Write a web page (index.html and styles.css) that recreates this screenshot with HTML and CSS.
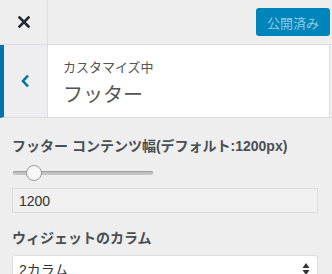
FILE: index.html
```html
<!DOCTYPE html>
<html lang="ja">
<head>
  <meta charset="UTF-8" />
  <meta name="viewport" content="width=device-width, initial-scale=1.0" />
  <title>カスタマイズ</title>
  <link rel="stylesheet" href="styles.css">
</head>
<body>
  <div class="sidebar">
    <header class="topbar">
      <button type="button" class="close-btn" aria-label="閉じる">
        <svg width="12" height="12" viewBox="0 0 12 12">
          <path d="M1.5 1.5 L10.5 10.5 M10.5 1.5 L1.5 10.5" stroke="#23282d" stroke-width="2.6" stroke-linecap="square" />
        </svg>
      </button>
      <button type="button" class="publish-btn" disabled>公開済み</button>
    </header>

    <section class="panel-head">
      <button type="button" class="back-btn" aria-label="戻る">
        <svg width="9" height="14" viewBox="0 0 9 14">
          <path d="M7 1.5 L2 7 L7 12.5" fill="none" stroke="#0073aa" stroke-width="2.6" />
        </svg>
      </button>
      <div class="panel-title">
        <span class="panel-sub">カスタマイズ中</span>
        <h2>フッター</h2>
      </div>
    </section>

    <main class="controls">
      <label class="control-label">フッター コンテンツ幅(デフォルト:1200px)</label>
      <div class="slider">
        <div class="slider-track"></div>
        <div class="slider-thumb"></div>
      </div>
      <input type="text" class="text-input" value="1200" />

      <label class="control-label second">ウィジェットのカラム</label>
      <div class="select">
        <span>2カラム</span>
        <svg width="8" height="14" viewBox="0 0 8 14">
          <path d="M4 1 L7.5 6 L0.5 6 Z M4 13 L7.5 8 L0.5 8 Z" fill="#333" />
        </svg>
      </div>
    </main>
  </div>
</body>
</html>
```

FILE: styles.css
```css
:root {
  --wp-blue: #0073aa;
  --border: #ddd;
  --bg: #eee;
  --text: #555d66;
}

body {
  margin: 0;
  background: var(--bg);
  font-family: "Liberation Sans", "Noto Sans CJK JP", sans-serif;
  color: var(--text);
}

.sidebar {
  width: 332px;
  height: 274px;
  overflow: hidden;
}

.topbar {
  display: flex;
  justify-content: space-between;
  align-items: center;
  height: 44px;
  border-bottom: 1px solid var(--border);
}

.close-btn {
  width: 48px;
  height: 44px;
  padding: 0;
  border: none;
  border-right: 1px solid var(--border);
  background: transparent;
  display: flex;
  align-items: center;
  justify-content: center;
}

.publish-btn {
  width: 74px;
  height: 28px;
  margin-right: 2px;
  padding: 0;
  border: none;
  border-radius: 3px;
  background: #0085ba;
  color: #8fcbe4;
  font-family: "Liberation Sans", "Noto Sans CJK JP", sans-serif;
  font-size: 13px;
}

.panel-head {
  display: flex;
  height: 72px;
  border-left: 4px solid var(--wp-blue);
  border-bottom: 1px solid var(--border);
}

.back-btn {
  width: 44px;
  padding: 0;
  border: none;
  border-right: 1px solid var(--border);
  background: #eeeef0;
  display: flex;
  align-items: center;
  justify-content: center;
}

.panel-title {
  flex: 1;
  background: #fff;
  margin-right: 2px;
  border-right: 1px solid var(--border);
  padding: 14px 0 0 15px;
}

.panel-sub {
  display: block;
  font-size: 13px;
  line-height: 18px;
  color: #555;
}

.panel-title h2 {
  margin: 5px 0 0;
  font-size: 20px;
  line-height: 26px;
  font-weight: normal;
  color: #555;
}

.controls {
  padding: 18px 14px 0 12px;
}

.control-label {
  display: block;
  font-size: 14px;
  line-height: 20px;
  font-weight: bold;
  color: #4a4f55;
}

.control-label.second {
  margin-top: 15px;
}

.slider {
  position: relative;
  width: 140px;
  height: 16px;
  margin: 9px 0 7px 1px;
}

.slider-track {
  position: absolute;
  top: 6px;
  left: 0;
  right: 0;
  height: 4px;
  border-radius: 2px;
  background: #c4c4c4;
  box-shadow: inset 0 1px 1px #999;
}

.slider-thumb {
  position: absolute;
  top: 0;
  left: 13px;
  width: 14px;
  height: 14px;
  border-radius: 50%;
  border: 1px solid #999;
  background: #f8f8f8;
}

.text-input {
  display: block;
  box-sizing: border-box;
  width: 306px;
  height: 25px;
  padding: 0 6px;
  border: 1px solid var(--border);
  background: #f0f0f0;
  font-family: "Liberation Sans", "Noto Sans CJK JP", sans-serif;
  font-size: 14px;
  color: #333;
}

.select {
  box-sizing: border-box;
  width: 306px;
  height: 28px;
  margin-top: 7px;
  padding: 0 7px 0 6px;
  display: flex;
  justify-content: space-between;
  align-items: center;
  border: 1px solid var(--border);
  border-radius: 3px;
  background: #fff;
  font-size: 14px;
  color: #333;
}
```
